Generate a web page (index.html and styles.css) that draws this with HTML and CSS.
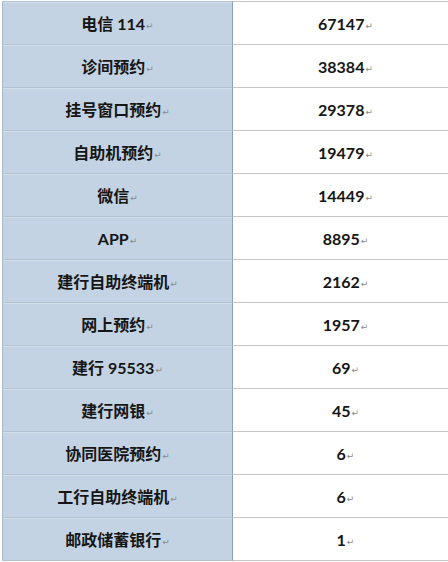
FILE: index.html
```html
<!DOCTYPE html>
<html lang="zh">
<head>
<meta charset="utf-8">
<title>预约方式统计</title>
<link rel="stylesheet" href="styles.css">
</head>
<body>
<div class="table">
  <div class="cell name">电信 114<span class="mk">↵</span></div><div class="cell num">67147<span class="mk">↵</span></div>
  <div class="cell name">诊间预约<span class="mk">↵</span></div><div class="cell num">38384<span class="mk">↵</span></div>
  <div class="cell name">挂号窗口预约<span class="mk">↵</span></div><div class="cell num">29378<span class="mk">↵</span></div>
  <div class="cell name">自助机预约<span class="mk">↵</span></div><div class="cell num">19479<span class="mk">↵</span></div>
  <div class="cell name">微信<span class="mk">↵</span></div><div class="cell num">14449<span class="mk">↵</span></div>
  <div class="cell name">APP<span class="mk">↵</span></div><div class="cell num">8895<span class="mk">↵</span></div>
  <div class="cell name">建行自助终端机<span class="mk">↵</span></div><div class="cell num">2162<span class="mk">↵</span></div>
  <div class="cell name">网上预约<span class="mk">↵</span></div><div class="cell num">1957<span class="mk">↵</span></div>
  <div class="cell name">建行 95533<span class="mk">↵</span></div><div class="cell num">69<span class="mk">↵</span></div>
  <div class="cell name">建行网银<span class="mk">↵</span></div><div class="cell num">45<span class="mk">↵</span></div>
  <div class="cell name">协同医院预约<span class="mk">↵</span></div><div class="cell num">6<span class="mk">↵</span></div>
  <div class="cell name">工行自助终端机<span class="mk">↵</span></div><div class="cell num">6<span class="mk">↵</span></div>
  <div class="cell name">邮政储蓄银行<span class="mk">↵</span></div><div class="cell num">1<span class="mk">↵</span></div>
</div>
</body>
</html>
```
FILE: styles.css
```css
html, body {
  margin: 0;
  padding: 0;
  background: #ffffff;
  overflow: hidden;
}
body {
  padding: 1px 0 0 2px;
  width: 448px;
  height: 562px;
  box-sizing: border-box;
}
.table {
  display: grid;
  grid-template-columns: 231px 225px;
  width: 456px;
  font-family: Lato, "Noto Sans CJK SC", sans-serif;
  font-weight: 700;
  font-size: 16px;
  color: #161616;
}
.cell {
  height: 42px;
  display: flex;
  align-items: center;
  justify-content: center;
  border-top: 1px solid #c6c6c6;
  white-space: nowrap;
}
.name {
  background: #c3d3e3;
  border-left: 1px solid #a9b9c9;
  border-right: 1px solid #8ea2b4;
  border-top-color: #b3c2d1;
  box-shadow: inset 0 1px 0 #d3dfeb;
}
.num {
  background: #ffffff;
}
.cell:nth-last-child(-n+2) {
  border-bottom: 1px solid #c6c6c6;
}
.name:nth-last-child(2) {
  border-bottom-color: #b3c2d1;
}
.mk {
  font-family: "DejaVu Sans", sans-serif;
  font-weight: 400;
  font-size: 9px;
  color: #8a8a8a;
  margin-left: 1px;
  position: relative;
  top: 3px;
}
```
